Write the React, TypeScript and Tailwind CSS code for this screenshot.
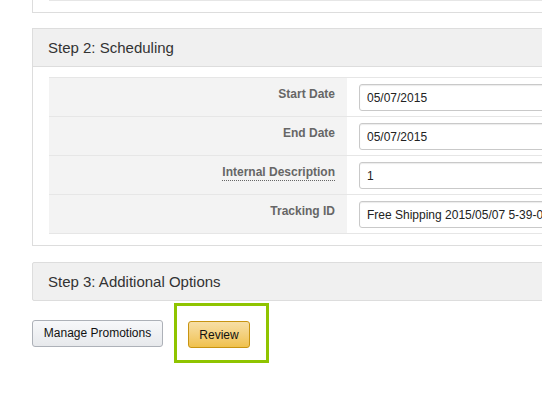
import React from "react";

const rows = [
  { label: "Start Date", value: "05/07/2015" },
  { label: "End Date", value: "05/07/2015" },
  { label: "Internal Description", value: "1", dotted: true },
  { label: "Tracking ID", value: "Free Shipping 2015/05/07 5-39-0-234" },
];

function FieldRow({ label, value, dotted }: { label: string; value: string; dotted?: boolean }) {
  return (
    <div className="flex h-[39px] border-t border-[#e6e6e6]">
      <div className="w-[298px] shrink-0 bg-[#f3f3f3] pr-[12px] pt-[3px] text-right">
        <span
          className={
            "text-[12px] font-bold text-[#666] " +
            (dotted ? "border-b border-dotted border-[#666] pb-[1px]" : "")
          }
        >
          {label}
        </span>
      </div>
      <div className="pl-[12px] pt-[6px]">
        <input
          readOnly
          value={value}
          className="h-[27px] w-[400px] rounded-[3px] border border-[#c9c9c9] px-[7px] text-[12px] text-[#222] shadow-[inset_0_1px_1px_rgba(0,0,0,0.08)] outline-none"
        />
      </div>
    </div>
  );
}

export default function App() {
  return (
    <div className="h-screen w-[542px] overflow-hidden bg-white font-['Liberation_Sans',Arial,sans-serif]">
      <div className="ml-[32px] w-[620px]">
        {/* tail of step 1 */}
        <div className="h-[13px] border border-t-0 border-[#dddddd] px-[16px]">
          <div className="h-px bg-[#e6e6e6]" />
        </div>

        {/* step 2 */}
        <div className="mt-[15px] border border-[#dddddd]">
          <div className="flex h-[38px] items-center border-b border-[#dddddd] bg-[#f0f0f0] px-[15px] pt-[2px] text-[15px] text-[#333]">
            Step 2: Scheduling
          </div>
          <div className="px-[16px] pb-[11px] pt-[10px]">
            <div className="border-b border-[#e6e6e6]">
              {rows.map((r) => (
                <FieldRow key={r.label} {...r} />
              ))}
            </div>
          </div>
        </div>

        {/* step 3 */}
        <div className="mt-[16px] flex h-[39px] items-center rounded-[2px] border border-[#dddddd] bg-[#f0f0f0] px-[15px] pt-[2px] text-[15px] text-[#333]">
          Step 3: Additional Options
        </div>

        <div className="mt-[2px] flex items-center gap-[11px]">
          <button className="h-[27px] w-[131px] rounded-[3px] border border-[#adb1b8] bg-gradient-to-b from-[#f7f8fa] to-[#e7e9ec] text-[12px] text-[#111]">
            Manage Promotions
          </button>
          <div className="h-[60px] w-[95px] border-[3px] border-[#8fc400] pl-[11px] pt-[15px]">
            <button className="h-[27px] w-[62px] rounded-[3px] border border-[#c89411] bg-gradient-to-b from-[#f7dfa5] to-[#f0c14b] text-[12px] text-[#111]">
              Review
            </button>
          </div>
        </div>
      </div>
    </div>
  );
}
